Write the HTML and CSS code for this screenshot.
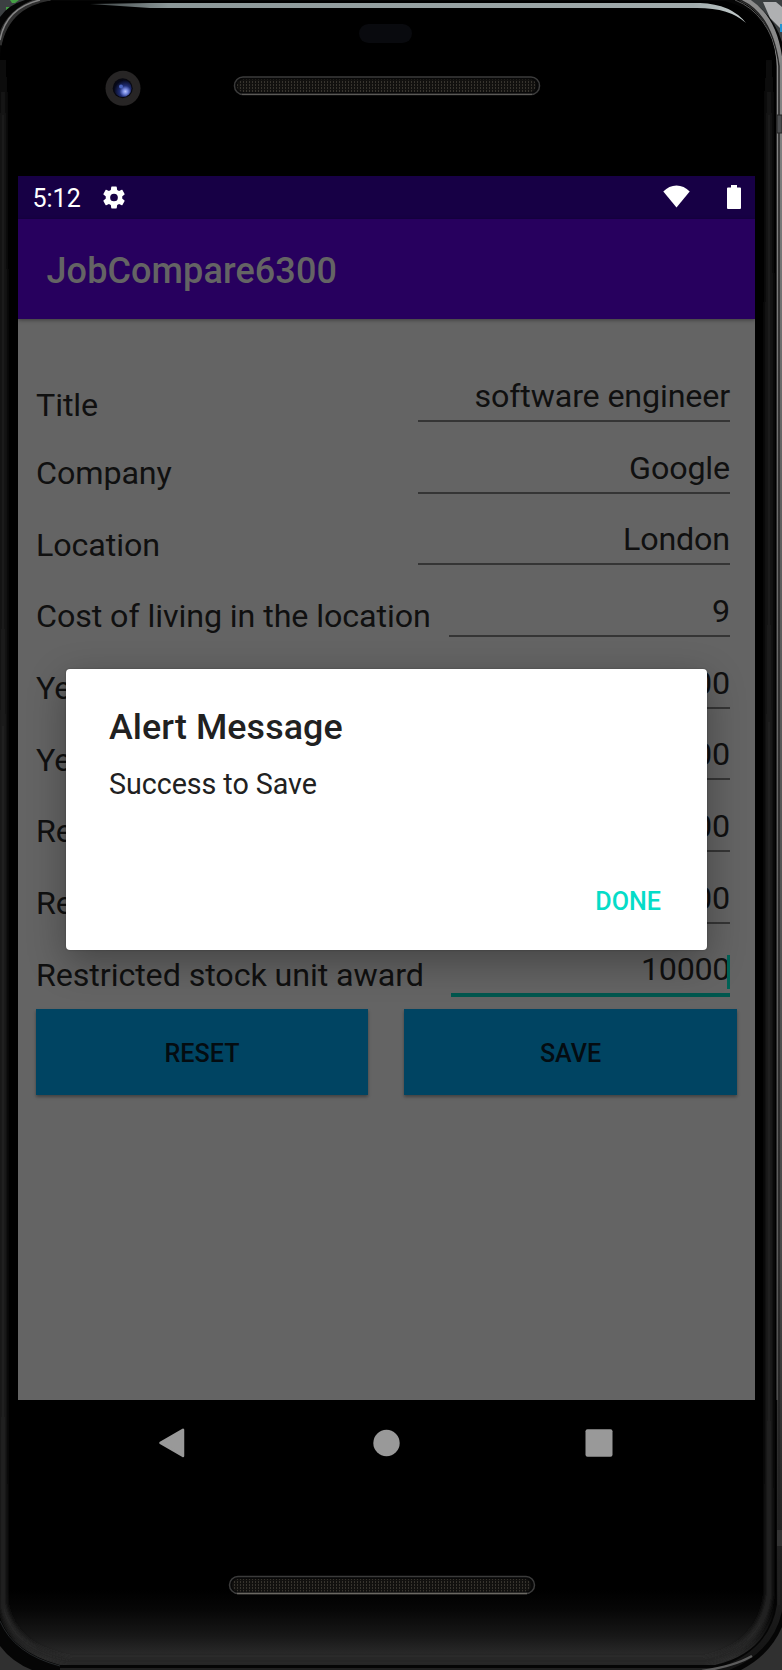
FILE: index.html
```html
<!DOCTYPE html>
<html lang="en">
<head>
<meta charset="utf-8">
<title>JobCompare6300</title>
<link rel="stylesheet" href="styles.css">
</head>
<body>
<div class="device">
  <svg class="bezel" width="782" height="1670" viewBox="0 0 782 1670" aria-hidden="true">
    <defs>
      <linearGradient id="rim" gradientUnits="userSpaceOnUse" x1="0" x2="0" y1="0" y2="1670"><stop offset="0" stop-color="#8c8c8c"/><stop offset=".3" stop-color="#606060"/><stop offset=".75" stop-color="#484848"/><stop offset=".93" stop-color="#202020"/><stop offset="1" stop-color="#141414"/></linearGradient>
      <linearGradient id="glow" gradientUnits="userSpaceOnUse" x1="0" x2="0" y1="40" y2="1670"><stop offset="0" stop-color="#000"/><stop offset=".05" stop-color="#1c1c1c"/><stop offset="1" stop-color="#262626"/></linearGradient>
      <linearGradient id="chin" x1="0" x2="0" y1="0" y2="1"><stop offset="0" stop-color="#000"/><stop offset=".25" stop-color="#060606"/><stop offset=".6" stop-color="#171717"/><stop offset=".9" stop-color="#2d2d2d"/><stop offset="1" stop-color="#282828"/></linearGradient>
      <linearGradient id="shine" x1="0" x2="1" y1="0" y2="0"><stop offset="0" stop-color="#3b4142"/><stop offset=".12" stop-color="#8b9798"/><stop offset=".92" stop-color="#a1abac"/><stop offset="1" stop-color="#c4cccc"/></linearGradient>
      <radialGradient id="lens" cx=".65" cy=".68" r=".65"><stop offset="0" stop-color="#b9c5ff"/><stop offset=".22" stop-color="#7386dd"/><stop offset=".5" stop-color="#1f2d74"/><stop offset="1" stop-color="#060818"/></radialGradient>
      <pattern id="mesh" width="3" height="3" patternUnits="userSpaceOnUse"><rect width="3" height="3" fill="#12110f"/><rect width="1" height="2" fill="#37342e"/></pattern>
      <filter id="soft" x="-5%" width="110%"><feGaussianBlur stdDeviation="2"/></filter>
      <clipPath id="body"><path d="M0 60Q2 10 48 1H725Q773 14 776 60V1600Q770 1652 715 1665H60Q12 1652 0 1618Z"/></clipPath>
    </defs>
    <rect width="782" height="60" fill="#3c4042"/>
    <rect y="1600" width="782" height="70" fill="#303030"/>
    <path d="M10 0H19L15 3H12ZM6 7H11L6 12Z" fill="#45a044"/>
    <path d="M763 2H776L782 7V30L770 18Z" fill="#afb0b2"/>
    <rect x="780" y="24" width="2" height="8" fill="#2394d2"/>
    <path d="M0 17Q8 5 25 0H750Q774 15 782 42V1627Q770 1655 741 1670H32Q12 1662 0 1646Z" fill="#050505"/>
    <path d="M50 -2Q6 7 -1 45" fill="none" stroke="#303030" stroke-width="6"/>
    <path d="M40 0Q6 8 0 40" fill="none" stroke="#858585" stroke-width="1.500"/>
    <path d="M741 -2Q776 14 780 66V1605Q773 1654 715 1672" fill="none" stroke="url(#rim)" stroke-width="6"/>
    <path d="M740 0Q772 14 779 66V1605" fill="none" stroke="#222" stroke-width="1.500"/>
    <path d="M735 0Q770 14 777 60V1400" fill="none" stroke="#8d8d8d" stroke-width="1" opacity=".6"/>
    <g clip-path="url(#body)">
      <rect width="782" height="1670" fill="#000"/>
      <rect y="1590" width="776" height="76" fill="url(#chin)"/>
      <path d="M3 50V1605Q12 1650 70 1661H705Q762 1648 769 1595V60" fill="none" stroke="url(#glow)" stroke-width="7" filter="url(#soft)"/>
    </g>
    <path d="M60 1666H715" stroke="#050505" stroke-width="2"/>
    <path d="M60 1669H715" stroke="#202020" stroke-width="2"/>
    <path d="M0 1621Q14 1654 60 1666" fill="none" stroke="#25282a" stroke-width="1"/>
    <path d="M702 1671Q735 1666 752 1656" fill="none" stroke="#5c5c5c" stroke-width="2.500"/>
    <rect x="777" y="115" width="5" height="18" fill="#4b4d4f" stroke="#252525"/>
    <rect x="777" y="1530" width="5" height="16" fill="#343434"/>
    <path d="M90 4L150 3H700Q731 4 746 23Q730 8 697 8H150Z" fill="url(#shine)"/>
    <rect x="359" y="24" width="53" height="19" rx="9.500" fill="#090a0e"/>
    <circle cx="123" cy="88.300" r="17.500" fill="#272525"/>
    <circle cx="122.700" cy="88.300" r="10" fill="#080810"/>
    <circle cx="122.700" cy="88.300" r="8.800" fill="url(#lens)"/>
    <circle cx="121" cy="86.500" r="2" fill="#4963bd"/>
    <rect x="234.500" y="77" width="305" height="17.500" rx="8.500" fill="#080808" stroke="#3b3b3b" stroke-width="1.500"/>
    <rect x="237" y="79.500" width="299" height="12.500" rx="6" fill="url(#mesh)"/>
    <path d="M242 94.300H532" stroke="#5b5a57" stroke-width="1.300"/>
    <rect x="229.500" y="1576.500" width="305" height="17" rx="8.500" fill="#080808" stroke="#3b3b3b" stroke-width="1.500"/>
    <rect x="232" y="1579" width="299" height="12.500" rx="6" fill="url(#mesh)"/>
    <path d="M237 1593.500H527" stroke="#6b6963" stroke-width="1.300"/>
  </svg>

  <main class="screen">
    <header class="status">
      <span class="clock">5:12</span>
      <svg class="gear" viewBox="2 2 20 20"><path fill="#fff" fill-rule="evenodd" d="M19.430 12.980c.040-.320.070-.640.070-.980s-.030-.660-.070-.980l2.110-1.650c.190-.150.240-.420.120-.640l-2-3.460c-.120-.220-.390-.300-.610-.220l-2.490 1c-.520-.400-1.080-.730-1.690-.980l-.380-2.650A.488.488 0 0 0 14 2h-4c-.250 0-.460.180-.490.420l-.380 2.650c-.610.250-1.170.590-1.690.980l-2.490-1c-.230-.090-.490 0-.610.220l-2 3.460c-.130.220-.070.490.120.640l2.110 1.650c-.040.320-.070.650-.070.980s.030.660.070.980l-2.110 1.650c-.190.150-.240.420-.120.640l2 3.460c.120.220.390.300.610.220l2.490-1c.520.400 1.080.730 1.690.980l.380 2.650c.030.240.240.420.490.420h4c.250 0 .460-.180.490-.420l.380-2.650c.610-.250 1.170-.590 1.690-.980l2.490 1c.230.090.490 0 .610-.220l2-3.460c.120-.220.070-.490-.120-.640zM12 15.500a3.500 3.500 0 1 1 0-7 3.500 3.500 0 0 1 0 7z"/></svg>
      <svg class="wifi" viewBox="0 0 27 23"><path fill="#fff" d="M13.500 22.500L.3 6.500Q6 .5 13.500.5T26.700 6.500Z"/></svg>
      <svg class="battery" viewBox="0 0 14 24"><path fill="#fff" d="M4 0H10V2.500H13Q14 2.500 14 3.500V23Q14 24 13 24H1Q0 24 0 23V3.500Q0 2.500 1 2.500H4Z"/></svg>
    </header>
    <h1 class="appbar">JobCompare6300</h1>
    <section class="form">
      <div class="row first"><span class="label">Title</span><span class="field">software engineer</span></div>
      <div class="row"><span class="label">Company</span><span class="field">Google</span></div>
      <div class="row"><span class="label">Location</span><span class="field">London</span></div>
      <div class="row"><span class="label">Cost of living in the location</span><span class="field cost">9</span></div>
      <div class="row"><span class="label">Ye</span><span class="field">00</span></div>
      <div class="row"><span class="label">Ye</span><span class="field">00</span></div>
      <div class="row"><span class="label">Re</span><span class="field">00</span></div>
      <div class="row"><span class="label">Re</span><span class="field">00</span></div>
      <div class="row"><span class="label">Restricted stock unit award</span><span class="field focus">10000<i class="caret"></i></span></div>
      <div class="actions"><button class="action">RESET</button><button class="action">SAVE</button></div>
    </section>
    <div class="dialog" role="dialog">
      <h2 class="dialog-title">Alert Message</h2>
      <p class="dialog-text">Success to Save</p>
      <button class="done">DONE</button>
    </div>
  </main>

  <nav class="nav">
    <svg width="26" height="30" viewBox="0 0 26 30"><path d="M1.500 14.900L24 1.800V28Z" fill="#999" stroke="#999" stroke-width="2.500" stroke-linejoin="round"/></svg>
    <svg class="home" width="27" height="30" viewBox="0 0 27 30"><circle cx="13.500" cy="15" r="13.200" fill="#999"/></svg>
    <svg width="28" height="30" viewBox="0 0 28 30"><rect x=".5" y="1.300" width="27" height="27.400" rx="2" fill="#999"/></svg>
  </nav>
</div>
</body>
</html>
```
FILE: styles.css
```css
* { box-sizing: border-box; }
body { margin: 0; background: #000; font-family: Roboto, "Liberation Sans", sans-serif; }
h1, h2, p { margin: 0; }
button { font-family: inherit; border: 0; padding: 0; }
.device { position: relative; width: 782px; height: 1670px; padding: 176px 27px 0 18px; overflow: hidden; }
.bezel { position: absolute; left: 0; top: 0; }
.screen { position: relative; width: 737px; height: 1224px; background: #646464; overflow: hidden; }

.status { display: flex; align-items: center; height: 43px; padding: 0 14px 0 14.500px; background: #170045; }
.clock { color: #fff; font-size: 25px; line-height: 30px; padding-top: 3px; }
.gear { width: 22px; height: 23px; margin-left: 22px; }
.wifi { width: 27px; height: 23px; margin: 0 37px 2px auto; }
.battery { width: 14px; height: 24px; margin-bottom: 1px; }

.appbar { height: 100px; padding-left: 28.500px; background: #27005e; color: #646464; font-size: 36px; letter-spacing: .1px; font-weight: 500; line-height: 105px; box-shadow: 0 1px 4px rgba(0, 0, 0, .4); }

.form { padding: 44.700px 18px 0; }
.row { display: flex; justify-content: space-between; height: 71.700px; padding-right: 7px; color: #101010; font-size: 32.270px; letter-spacing: -.1px; line-height: 38px; white-space: nowrap; }
.label { padding-top: 18.600px; }
.first .label { padding-top: 22.600px; }
.field { position: relative; width: 312px; height: 58.300px; padding-top: 13.300px; text-align: right; letter-spacing: -.16px; border-bottom: 2px solid #353535; }
.field.cost { width: 281px; }
.field.focus { width: 279px; height: 60px; letter-spacing: -.35px; border-bottom: 4px solid #00574e; }
.caret { position: absolute; right: 0; top: 18px; width: 3.500px; height: 34px; background: #006357; }
.actions { display: flex; justify-content: space-between; }
.action { width: 333px; height: 86px; padding-top: 3px; background: #004462; color: #040c11; font-size: 25.100px; font-weight: 500; box-shadow: 0 2px 3px rgba(0, 0, 0, .35); }
.action:first-child { width: 332px; }

.dialog { position: absolute; left: 48px; top: 492.500px; width: 641px; height: 281.500px; padding: 37px 46px 0 43px; display: flex; flex-direction: column; background: #fff; border-radius: 4px; box-shadow: 0 12px 38px rgba(0, 0, 0, .32), 0 0 2px rgba(0, 0, 0, .3); }
.dialog-title { color: #212121; font-size: 35.850px; letter-spacing: .08px; line-height: 42px; font-weight: 500; }
.dialog-text { margin-top: 19px; color: #212121; font-size: 28.680px; letter-spacing: -.05px; line-height: 34px; }
.done { align-self: flex-end; margin-top: 86px; background: none; color: #06dcc8; font-size: 25.100px; line-height: 30px; font-weight: 500; }

.nav { position: relative; display: flex; justify-content: space-between; padding: 28px 142.500px 0 140.500px; }
.home { margin-left: 4px; }
```
